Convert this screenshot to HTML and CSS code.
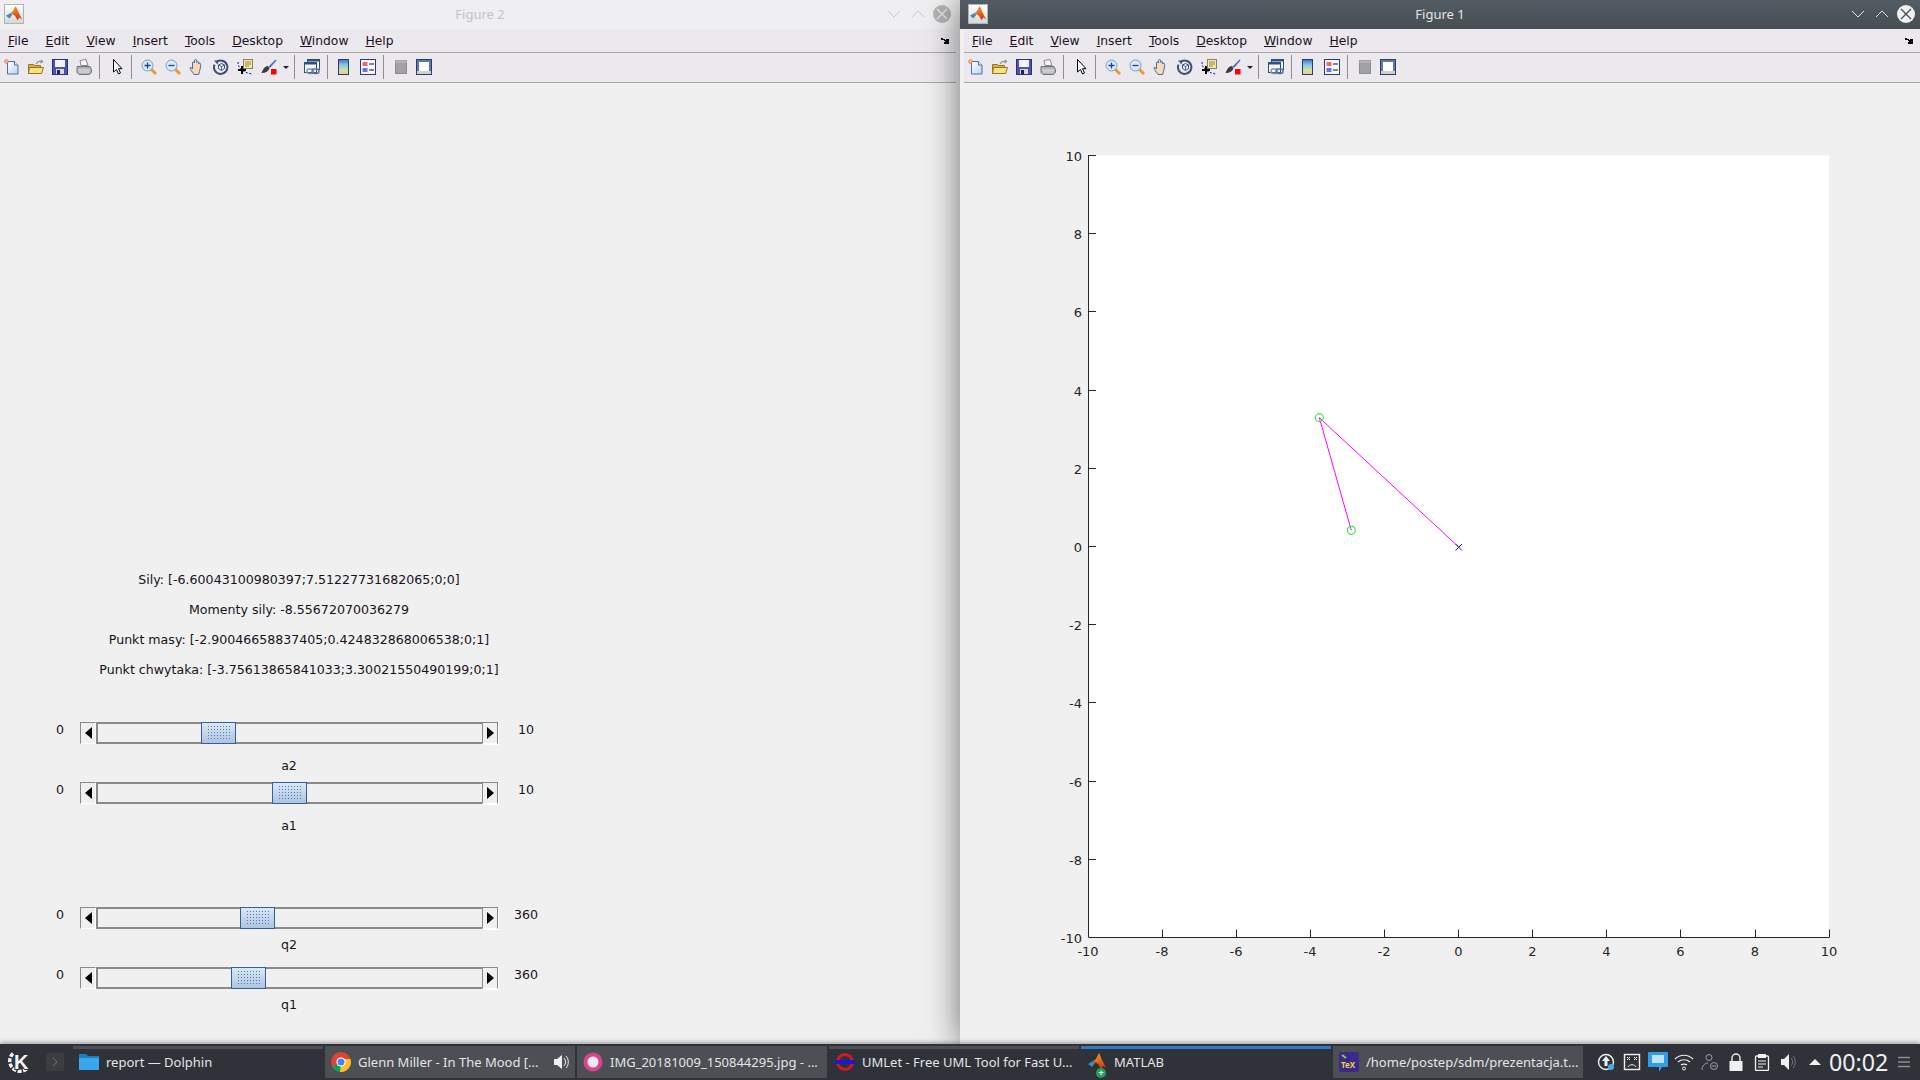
FILE: index.html
```html
<!DOCTYPE html>
<html lang="en">
<head>
    <meta charset="UTF-8">
    <title>Figure 1</title>
    <link rel="stylesheet" href="styles.css">
</head>
<body>
    <svg class="icon-defs" xmlns="http://www.w3.org/2000/svg">
        <defs>
            <linearGradient id="gradBar" x1="0" y1="0" x2="0" y2="1">
                <stop offset="0" stop-color="#3f6fd0"/>
                <stop offset=".35" stop-color="#86c6e0"/>
                <stop offset=".7" stop-color="#cfe0a8"/>
                <stop offset="1" stop-color="#f6c888"/>
            </linearGradient>
            <linearGradient id="gradDoc" x1="0" y1="0" x2="1" y2="1">
                <stop offset="0" stop-color="#ffffff"/>
                <stop offset="1" stop-color="#b8d4f0"/>
            </linearGradient>
            <linearGradient id="gradPeak" x1="0" y1="0" x2="0" y2="1">
                <stop offset="0" stop-color="#f59a1c"/>
                <stop offset="1" stop-color="#c8321a"/>
            </linearGradient>
        </defs>
        <symbol id="i-matlab" viewBox="0 0 20 20">
            <path d="M1 12l5-3 2 2-3 4z" fill="#3f8fb4"/>
            <path d="M6 9l3-2 3-6 3 7 4 8-3-2-2 3-3-5-3-2z" fill="url(#gradPeak)"/>
            <path d="M12 1l-3 6-2 4 4-2z" fill="#e8781f"/>
        </symbol>
        <symbol id="i-new" viewBox="0 0 16 16">
            <path d="M3.5 2.5h7l3.5 3.500v9H3.500z" fill="url(#gradDoc)" stroke="#4c72a4"/>
            <path d="M10.5 2.5V6H14" fill="#eef4fb" stroke="#4c72a4"/>
            <circle cx="2.5" cy="2.5" r="1.8" fill="#f8c090" stroke="#e8683a" stroke-width=".8"/>
        </symbol>
        <symbol id="i-open" viewBox="0 0 16 16">
            <path d="M.5 5.5h5l1 1h6v8H.5z" fill="#e0b23c" stroke="#94761c"/>
            <path d="M.5 14.5l1-6h14l-2 6z" fill="#f8e288" stroke="#94761c"/>
            <path d="M8 5c1-2 3-3 5-2.500M13 1l1.500 1.500-2 1.500" fill="none" stroke="#7e8fa0" stroke-width="1.2"/>
        </symbol>
        <symbol id="i-save" viewBox="0 0 16 16">
            <rect x=".5" y=".5" width="15" height="15" fill="#4a55b0" stroke="#2c3278"/>
            <rect x="3" y="1" width="10" height="7" fill="#f2f2f8"/>
            <rect x="4" y="10" width="8" height="5" fill="#d8d8d8"/>
            <rect x="5" y="11" width="3" height="4" fill="#22244c"/>
        </symbol>
        <symbol id="i-print" viewBox="0 0 16 16">
            <path d="M4 1.5l6-1 2 6H5z" fill="#f4f4f4" stroke="#8a8a8a"/>
            <path d="M1 7.5h13l1.500 3v3l-2 2H3l-2-2z" fill="#b4b4b4" stroke="#747474"/>
            <path d="M2 11h12M3 13h10" stroke="#e4e4e4"/>
        </symbol>
        <symbol id="i-arrow" viewBox="0 0 16 16">
            <path d="M4.5 .5V13l3-2.500 2 4.500 2-1-2-4.300H13z" fill="#fff" stroke="#000"/>
        </symbol>
        <symbol id="i-zoomin" viewBox="0 0 16 16">
            <path d="M10 10l5 5" stroke="#e89a38" stroke-width="3"/>
            <circle cx="6.5" cy="6.5" r="5.5" fill="#d6eaf8" stroke="#7e9cb6"/>
            <path d="M3.5 6.5h6M6.5 3.5v6" stroke="#23409c" stroke-width="1.3"/>
        </symbol>
        <symbol id="i-zoomout" viewBox="0 0 16 16">
            <path d="M10 10l5 5" stroke="#e89a38" stroke-width="3"/>
            <circle cx="6.5" cy="6.5" r="5.5" fill="#d6eaf8" stroke="#7e9cb6"/>
            <path d="M3.5 6.5h6" stroke="#23409c" stroke-width="1.3"/>
        </symbol>
        <symbol id="i-hand" viewBox="0 0 16 16">
            <path d="M5 15.5c-1-2-4-5-4-6.500 0-1 1.500-1 2.500 1V4c0-1.500 1.800-1.500 2 0V1.500c0-1.500 2-1.500 2.200 0v2c.3-1.500 2-1.300 2 .2V5c.5-1.300 2-1 2 .5 0 3-1 6-2 10z" fill="#fbd8b4" stroke="#3f6ea8"/>
        </symbol>
        <symbol id="i-rotate" viewBox="0 0 16 16">
            <path d="M4 2.6a6.700 6.700 0 1 1-2.500 3" fill="none" stroke="#3a5078" stroke-width="2"/>
            <path d="M1 1.500h4.500l-1 4z" fill="#3a5078"/>
            <path d="M5.500 6l3-1.500 3 1.500v3.500l-3 2-3-2z" fill="#e6eef6" stroke="#3a5078"/>
            <path d="M8.500 7.500V11M5.500 6l3 1.500 3-1.500" stroke="#3a5078" fill="none" stroke-width=".8"/>
        </symbol>
        <symbol id="i-cursor" viewBox="0 0 16 16">
            <rect x="6.5" y=".5" width="9" height="9" fill="#f4e9a4" stroke="#8c8458"/>
            <path d="M8 3h6M8 5h6M8 7h4" stroke="#8c8458"/>
            <path d="M1 3c0 5 3 10 14 12" fill="none" stroke="#1212e0" stroke-dasharray="2 1.5"/>
            <path d="M1 11h8M5 7v8" stroke="#000" stroke-width="2"/>
        </symbol>
        <symbol id="i-brush" viewBox="0 0 16 16">
            <path d="M14.500 .5l-7 7L9 9l6.500-7.500z" fill="#3c62b8" stroke="#b4c6e8" stroke-width=".6"/>
            <path d="M7 7c-3 0-5 3-6.500 7 2.500 0 6-.5 8-4.500z" fill="#3c3c3c"/>
            <rect x="10" y="10" width="5.5" height="5.5" fill="#f00"/>
        </symbol>
        <symbol id="i-link" viewBox="0 0 16 16">
            <rect x="3.5" y=".5" width="12" height="10" fill="#f4f6fa" stroke="#30507c"/>
            <rect x="3.5" y=".5" width="12" height="2" fill="#30507c"/>
            <rect x=".5" y="3.5" width="12" height="10" fill="#f4f6fa" stroke="#30507c"/>
            <rect x=".5" y="3.5" width="12" height="2" fill="#30507c"/>
            <rect x="3" y="10" width="6.5" height="4.5" rx="2.2" fill="none" stroke="#8094ac" stroke-width="1.5"/>
            <rect x="8" y="10" width="7" height="4.5" rx="2.2" fill="none" stroke="#5c7494" stroke-width="1.5"/>
        </symbol>
        <symbol id="i-colorbar" viewBox="0 0 16 16">
            <rect x="2.5" y=".5" width="10" height="15" fill="url(#gradBar)" stroke="#283c70"/>
        </symbol>
        <symbol id="i-legend" viewBox="0 0 16 16">
            <rect x=".5" y=".5" width="15" height="15" fill="#f8f8fc" stroke="#283c70"/>
            <rect x="2.5" y="3" width="5" height="4" fill="#e86a6a"/>
            <rect x="2.5" y="9" width="5" height="4" fill="#7070e0"/>
            <path d="M9 5h5M9 11h5" stroke="#101010"/>
        </symbol>
        <symbol id="i-square" viewBox="0 0 16 16">
            <rect x="2.5" y="1.5" width="11" height="13" fill="#a2a2a2" stroke="#8c8c8c"/>
            <rect x="2.5" y="1.5" width="11" height="2" fill="#b8b8b8"/>
        </symbol>
        <symbol id="i-browser" viewBox="0 0 16 16">
            <rect x=".5" y=".5" width="15" height="15" fill="#5f78a8" stroke="#283c70"/>
            <rect x="3" y="3" width="10" height="9" fill="#fff"/>
            <rect x="1" y="12" width="14" height="3" fill="#cfd4c8"/>
        </symbol>
    </svg>

    <div class="desk">
        <div class="window window-left">
            <div class="titlebar">
                <svg class="title-icon"><use href="#i-matlab"/></svg>
                <span class="title-text">Figure 2</span>
                <div class="title-btns">
                    <svg class="title-btn" viewBox="0 0 14 14"><path d="M1 4l6 6 6-6" fill="none" stroke="currentColor"/></svg>
                    <svg class="title-btn" viewBox="0 0 14 14"><path d="M1 10l6-6 6 6" fill="none" stroke="currentColor"/></svg>
                    <div class="close-btn"><svg viewBox="0 0 18 18"><path d="M4 4l10 10M14 4L4 14" fill="none" stroke="currentColor" stroke-width="1.3"/></svg></div>
                </div>
            </div>
            <div class="menubar">
                <span class="menu-item"><u>F</u>ile</span>
                <span class="menu-item"><u>E</u>dit</span>
                <span class="menu-item"><u>V</u>iew</span>
                <span class="menu-item"><u>I</u>nsert</span>
                <span class="menu-item"><u>T</u>ools</span>
                <span class="menu-item"><u>D</u>esktop</span>
                <span class="menu-item"><u>W</u>indow</span>
                <span class="menu-item"><u>H</u>elp</span>
                <svg class="dock-arrow" viewBox="0 0 9 8"><path d="M0 1h2v1h2v1h1V2h3v5H3V5h1V4H3V3H0z"/></svg>
            </div>
            <div class="toolbar">
                <span class="tool"><svg><use href="#i-new"/></svg></span>
                <span class="tool"><svg><use href="#i-open"/></svg></span>
                <span class="tool"><svg><use href="#i-save"/></svg></span>
                <span class="tool"><svg><use href="#i-print"/></svg></span>
                <span class="sep"></span>
                <span class="tool tool-narrow"><svg><use href="#i-arrow"/></svg></span>
                <span class="sep"></span>
                <span class="tool"><svg><use href="#i-zoomin"/></svg></span>
                <span class="tool"><svg><use href="#i-zoomout"/></svg></span>
                <span class="tool"><svg><use href="#i-hand"/></svg></span>
                <span class="tool"><svg><use href="#i-rotate"/></svg></span>
                <span class="tool"><svg><use href="#i-cursor"/></svg></span>
                <span class="tool"><svg><use href="#i-brush"/></svg></span>
                <span class="tool-drop"></span>
                <span class="sep"></span>
                <span class="tool"><svg><use href="#i-link"/></svg></span>
                <span class="sep sep-tight"></span>
                <span class="tool"><svg><use href="#i-colorbar"/></svg></span>
                <span class="tool"><svg><use href="#i-legend"/></svg></span>
                <span class="sep"></span>
                <span class="tool tool-narrow"><svg><use href="#i-square"/></svg></span>
                <span class="tool"><svg><use href="#i-browser"/></svg></span>
            </div>
            <div class="figure figure-controls">
                <div class="readout">
                    <p>Sily: [-6.60043100980397;7.51227731682065;0;0]</p>
                    <p>Momenty sily: -8.55672070036279</p>
                    <p>Punkt masy: [-2.90046658837405;0.424832868006538;0;1]</p>
                    <p>Punkt chwytaka: [-3.75613865841033;3.30021550490199;0;1]</p>
                </div>
                <div class="slider-group">
                    <div class="slider-row">
                        <span class="limit">0</span>
                        <div class="slider">
                            <span class="step step-left"></span>
                            <div class="track"><span class="thumb" style="margin-left:103px"></span></div>
                            <span class="step step-right"></span>
                        </div>
                        <span class="limit">10</span>
                        <span class="caption">a2</span>
                    </div>
                    <div class="slider-row">
                        <span class="limit">0</span>
                        <div class="slider">
                            <span class="step step-left"></span>
                            <div class="track"><span class="thumb" style="margin-left:174px"></span></div>
                            <span class="step step-right"></span>
                        </div>
                        <span class="limit">10</span>
                        <span class="caption">a1</span>
                    </div>
                </div>
                <div class="slider-group slider-group-angles">
                    <div class="slider-row">
                        <span class="limit">0</span>
                        <div class="slider">
                            <span class="step step-left"></span>
                            <div class="track"><span class="thumb" style="margin-left:142px"></span></div>
                            <span class="step step-right"></span>
                        </div>
                        <span class="limit">360</span>
                        <span class="caption">q2</span>
                    </div>
                    <div class="slider-row">
                        <span class="limit">0</span>
                        <div class="slider">
                            <span class="step step-left"></span>
                            <div class="track"><span class="thumb" style="margin-left:133px"></span></div>
                            <span class="step step-right"></span>
                        </div>
                        <span class="limit">360</span>
                        <span class="caption">q1</span>
                    </div>
                </div>
            </div>
        </div>

        <div class="window window-right">
            <div class="titlebar">
                <svg class="title-icon"><use href="#i-matlab"/></svg>
                <span class="title-text">Figure 1</span>
                <div class="title-btns">
                    <svg class="title-btn" viewBox="0 0 14 14"><path d="M1 4l6 6 6-6" fill="none" stroke="currentColor"/></svg>
                    <svg class="title-btn" viewBox="0 0 14 14"><path d="M1 10l6-6 6 6" fill="none" stroke="currentColor"/></svg>
                    <div class="close-btn"><svg viewBox="0 0 18 18"><path d="M4 4l10 10M14 4L4 14" fill="none" stroke="currentColor" stroke-width="1.3"/></svg></div>
                </div>
            </div>
            <div class="menubar">
                <span class="menu-item"><u>F</u>ile</span>
                <span class="menu-item"><u>E</u>dit</span>
                <span class="menu-item"><u>V</u>iew</span>
                <span class="menu-item"><u>I</u>nsert</span>
                <span class="menu-item"><u>T</u>ools</span>
                <span class="menu-item"><u>D</u>esktop</span>
                <span class="menu-item"><u>W</u>indow</span>
                <span class="menu-item"><u>H</u>elp</span>
                <svg class="dock-arrow" viewBox="0 0 9 8"><path d="M0 1h2v1h2v1h1V2h3v5H3V5h1V4H3V3H0z"/></svg>
            </div>
            <div class="toolbar">
                <span class="tool"><svg><use href="#i-new"/></svg></span>
                <span class="tool"><svg><use href="#i-open"/></svg></span>
                <span class="tool"><svg><use href="#i-save"/></svg></span>
                <span class="tool"><svg><use href="#i-print"/></svg></span>
                <span class="sep"></span>
                <span class="tool tool-narrow"><svg><use href="#i-arrow"/></svg></span>
                <span class="sep"></span>
                <span class="tool"><svg><use href="#i-zoomin"/></svg></span>
                <span class="tool"><svg><use href="#i-zoomout"/></svg></span>
                <span class="tool"><svg><use href="#i-hand"/></svg></span>
                <span class="tool"><svg><use href="#i-rotate"/></svg></span>
                <span class="tool"><svg><use href="#i-cursor"/></svg></span>
                <span class="tool"><svg><use href="#i-brush"/></svg></span>
                <span class="tool-drop"></span>
                <span class="sep"></span>
                <span class="tool"><svg><use href="#i-link"/></svg></span>
                <span class="sep sep-tight"></span>
                <span class="tool"><svg><use href="#i-colorbar"/></svg></span>
                <span class="tool"><svg><use href="#i-legend"/></svg></span>
                <span class="sep"></span>
                <span class="tool tool-narrow"><svg><use href="#i-square"/></svg></span>
                <span class="tool"><svg><use href="#i-browser"/></svg></span>
            </div>
            <div class="figure">
                <!-- viewBox uses page coordinates -->
                <svg class="plot" viewBox="964 83 956 961">
                    <rect x="1088.5" y="155.5" width="740.5" height="782" fill="#fff"/>
                    <path class="axis" d="M1088.5 155v782.500H1829.500"/>
                    <path class="axis" d="M1088.5 155.5h7.500M1088.5 233.5h7.500M1088.5 311.5h7.500M1088.5 390.5h7.500M1088.5 468.5h7.500M1088.5 546.5h7.500M1088.5 624.5h7.500M1088.5 702.5h7.500M1088.5 781.5h7.500M1088.5 859.5h7.500"/>
                    <path class="axis" d="M1162.5 937v-7.500M1236.5 937v-7.500M1310.5 937v-7.500M1384.5 937v-7.500M1458.5 937v-7.500M1532.5 937v-7.500M1606.5 937v-7.500M1680.5 937v-7.500M1755.5 937v-7.500M1829.5 937v-7.500"/>
                    <g class="ticks-y">
                        <text x="1082" y="161">10</text>
                        <text x="1082" y="239">8</text>
                        <text x="1082" y="317">6</text>
                        <text x="1082" y="396">4</text>
                        <text x="1082" y="474">2</text>
                        <text x="1082" y="552">0</text>
                        <text x="1082" y="630">-2</text>
                        <text x="1082" y="708">-4</text>
                        <text x="1082" y="787">-6</text>
                        <text x="1082" y="865">-8</text>
                        <text x="1082" y="943">-10</text>
                    </g>
                    <g class="ticks-x">
                        <text x="1088" y="956">-10</text>
                        <text x="1162" y="956">-8</text>
                        <text x="1236" y="956">-6</text>
                        <text x="1310" y="956">-4</text>
                        <text x="1384" y="956">-2</text>
                        <text x="1458.5" y="956">0</text>
                        <text x="1532.5" y="956">2</text>
                        <text x="1606.5" y="956">4</text>
                        <text x="1680.5" y="956">6</text>
                        <text x="1755" y="956">8</text>
                        <text x="1829" y="956">10</text>
                    </g>
                    <path d="M1351.3 530.3L1319.3 417.7L1458.7 547" fill="none" stroke="#f0f"/>
                    <circle cx="1319.3" cy="417.7" r="4" fill="none" stroke="#3fe83f" stroke-width="1.2"/>
                    <circle cx="1351.3" cy="530.3" r="4" fill="none" stroke="#3fe83f" stroke-width="1.2"/>
                    <path d="M1455.5 544l6.500 6.500M1462 544l-6.500 6.500" stroke="#1a1af0"/>
                </svg>
            </div>
        </div>
    </div>

    <div class="taskbar">
        <div class="kicker">
            <svg viewBox="0 0 24 24" class="kde-logo">
                <path d="M7 3.500A10 10 0 1 0 21 18.500" fill="none" stroke="#f2f2f2" stroke-width="3.500" stroke-dasharray="4 1.5"/>
                <text x="8" y="18.500" class="kde-k">K</text>
            </svg>
        </div>
        <div class="pager"><svg viewBox="0 0 18 18"><path d="M7 5l4 4-4 4" fill="none" stroke="#6f7477"/></svg></div>
        <div class="tasks">
            <div class="task task-open">
                <svg class="task-icon" viewBox="0 0 20 20">
                    <path d="M0 2h7l2 2h11v14H0z" fill="#1b7fc8"/>
                    <path d="M0 6h20v12H0z" fill="#3aa6ec"/>
                </svg>
                <span>report — Dolphin</span>
            </div>
            <div class="task task-lit">
                <svg class="task-icon" viewBox="0 0 20 20">
                    <circle cx="10" cy="10" r="10" fill="#db4437"/>
                    <path d="M10 10L1.300 15A10 10 0 0 0 10 20l5-8z" fill="#0f9d58"/>
                    <path d="M10 10l-1 10A10 10 0 0 0 19.500 7H10z" fill="#fbc02d"/>
                    <circle cx="10" cy="10" r="4.6" fill="#fff"/>
                    <circle cx="10" cy="10" r="3.5" fill="#4285f4"/>
                </svg>
                <span class="task-label">Glenn Miller - In The Mood [...</span>
                <svg class="task-sound" viewBox="0 0 16 16">
                    <path d="M1 5h3l5-4v14l-5-4H1z" fill="#eff0f1"/>
                    <path d="M11 4c2 2 2 6 0 8M13 2c3 3 3 9 0 12" fill="none" stroke="#eff0f1"/>
                </svg>
            </div>
            <div class="task task-lit">
                <svg class="task-icon" viewBox="0 0 20 20">
                    <circle cx="10" cy="10" r="9.5" fill="#d6458f"/>
                    <circle cx="10" cy="10" r="5.5" fill="#f4e9ef"/>
                </svg>
                <span>IMG_20181009_150844295.jpg - ...</span>
            </div>
            <div class="task task-open">
                <svg class="task-icon" viewBox="0 0 20 20">
                    <circle cx="10" cy="10" r="7.5" fill="none" stroke="#d81820" stroke-width="3"/>
                    <rect x="0" y="8" width="20" height="4" fill="#1818e0"/>
                </svg>
                <span>UMLet - Free UML Tool for Fast U...</span>
            </div>
            <div class="task task-active">
                <svg class="task-icon" viewBox="0 0 20 20"><use href="#i-matlab"/></svg>
                <span class="launch-badge">+</span>
                <span>MATLAB</span>
            </div>
            <div class="task task-lit">
                <svg class="task-icon" viewBox="0 0 20 20">
                    <rect width="20" height="20" rx="2" fill="#3a2a8c"/>
                    <path d="M3 3l4 3" stroke="#8fd03a" stroke-width="2"/>
                    <text x="2" y="16" class="tex-mark">TeX</text>
                </svg>
                <span>/home/postep/sdm/prezentacja.t...</span>
            </div>
        </div>
        <div class="tray">
            <svg class="tray-icon" viewBox="0 0 18 18">
                <circle cx="9" cy="9" r="7.5" fill="none" stroke="#eff0f1" stroke-width="1.4"/>
                <path d="M9 3l4 5h-2.500v5h-3V8H5z" fill="#eff0f1"/>
                <circle cx="14" cy="14" r="3" fill="#3daee9"/>
            </svg>
            <svg class="tray-icon" viewBox="0 0 18 18">
                <rect x="1.5" y="1.5" width="15" height="15" fill="none" stroke="#eff0f1" stroke-width="1.4"/>
                <path d="M4 4l3 3M7 4L4 7M11 4l3 3M14 4l-3 3M5 14c1-3 7-3 8 0" fill="none" stroke="#eff0f1"/>
            </svg>
            <svg class="tray-icon tray-icon-big" viewBox="0 0 20 20">
                <path d="M1 0h18a1 1 0 0 1 1 1v13a1 1 0 0 1-1 1h-5l-3 5v-5H1a1 1 0 0 1-1-1V1a1 1 0 0 1 1-1z" fill="#2f9ee8"/>
                <rect x="4" y="3" width="12" height="8" fill="#bfe2f8"/>
            </svg>
            <svg class="tray-icon tray-icon-big" viewBox="0 0 20 20">
                <path d="M1 7c5-5 13-5 18 0M4 10c3.500-3 8.500-3 12 0M7 13c1.500-1.300 4.500-1.300 6 0" fill="none" stroke="#eff0f1" stroke-width="1.2"/>
                <circle cx="10" cy="16.5" r="1.5" fill="none" stroke="#eff0f1"/>
            </svg>
            <svg class="tray-icon" viewBox="0 0 18 18">
                <circle cx="8" cy="4.5" r="3" fill="none" stroke="#9ea1a3"/>
                <path d="M1 17c0-4 3-7 6-7" fill="none" stroke="#9ea1a3"/>
                <circle cx="13" cy="13" r="3.5" fill="none" stroke="#9ea1a3"/>
                <path d="M11 13h4" stroke="#9ea1a3"/>
            </svg>
            <svg class="tray-icon" viewBox="0 0 18 18">
                <path d="M5 8V5a4 4 0 0 1 8 0v3" fill="none" stroke="#eff0f1" stroke-width="1.4"/>
                <rect x="2.5" y="8" width="13" height="10" fill="#eff0f1"/>
            </svg>
            <svg class="tray-icon" viewBox="0 0 18 18">
                <rect x="2.5" y="3" width="13" height="14.5" rx="1" fill="none" stroke="#eff0f1" stroke-width="1.3"/>
                <rect x="5" y="1" width="8" height="4" fill="#eff0f1"/>
                <path d="M5 8h8M5 11h8M5 14h5" stroke="#eff0f1"/>
            </svg>
            <svg class="tray-icon" viewBox="0 0 18 18">
                <path d="M2 6h3l5-5v16l-5-5H2z" fill="#eff0f1"/>
                <path d="M12 5c2 2 2 6 0 8M14 3c3 3 3 9 0 12" fill="none" stroke="#73777a"/>
            </svg>
            <svg class="tray-icon tray-up" viewBox="0 0 14 14"><path d="M1 10l6-6 6 6z" fill="#eff0f1"/></svg>
            <span class="clock">00:02</span>
            <svg class="tray-menu" viewBox="0 0 12 12"><path d="M0 1.500h12M0 6h12M0 10.500h12" stroke="#8b8e90" stroke-width="1.5"/></svg>
        </div>
    </div>
</body>
</html>
```

FILE: styles.css
```css
* {
    box-sizing: border-box;
    margin: 0;
    padding: 0;
}
html, body {
    width: 1920px;
    height: 1080px;
    overflow: hidden;
}
body {
    display: flex;
    flex-direction: column;
    font-family: "DejaVu Sans", sans-serif;
    background: #f0f0f0;
}
.icon-defs {
    position: absolute;
    width: 0;
    height: 0;
}
.desk {
    display: flex;
    height: 1044px;
}
.window {
    width: 960px;
    display: flex;
    flex-direction: column;
    background: #f0f0f0;
}
.window-left {
    padding-right: 4px;
}
.window-right {
    padding-left: 4px;
    position: relative;
    z-index: 1;
    box-shadow: 0 0 32px rgba(0, 0, 0, 0.55);
}

/* title bars */
.titlebar {
    height: 29px;
    display: flex;
    align-items: center;
    justify-content: center;
    position: relative;
    padding-bottom: 1px;
    font-family: "Noto Sans", sans-serif;
    font-size: 13px;
}
.window-left .titlebar {
    margin-right: -4px;
    background: #efeef0;
    color: #c4c4c6;
}
.window-right .titlebar {
    margin-left: -4px;
    background: linear-gradient(#545d64, #464d53);
    color: #e4e5e6;
}
.title-icon {
    position: absolute;
    left: 4px;
    top: 4px;
    width: 20px;
    height: 20px;
    background: linear-gradient(#ffffff, #d4d6d8);
    border: 1px solid #b0b4b8;
}
.window-right .title-icon {
    left: 8px;
}
.title-btns {
    position: absolute;
    right: 5px;
    top: 5px;
    display: flex;
    align-items: center;
    gap: 10px;
}
.window-left .title-btns {
    right: 9px;
}
.title-btn {
    width: 14px;
    height: 14px;
}
.window-left .title-btn {
    color: #c9c9cb;
}
.close-btn {
    width: 18px;
    height: 18px;
    margin-left: -2px;
    border-radius: 50%;
    background: #eff0f1;
    color: #4d4d4d;
}
.window-left .close-btn {
    background: #b4b4b4;
    color: #e8e8e8;
}
.close-btn svg {
    display: block;
}

/* menu and tool bars */
.menubar {
    height: 24px;
    display: flex;
    align-items: center;
    gap: 17px;
    padding: 0 6px 0 8px;
    background: #ebe9ed;
    border-bottom: 1px solid #a8a8a8;
    font-size: 12.3px;
    color: #1c1020;
}
.dock-arrow {
    width: 9px;
    height: 8px;
    margin-left: auto;
}
.toolbar {
    height: 30px;
    display: flex;
    align-items: center;
    padding-bottom: 1px;
    background: #ebe9ed;
    border-bottom: 1px solid #a8a8a8;
}
.tool {
    width: 24px;
    display: flex;
    justify-content: center;
}
.tool-narrow {
    width: 23px;
}
.tool svg {
    width: 16px;
    height: 16px;
}
.tool-drop {
    width: 6px;
    height: 3px;
    margin: 0 2px;
    border-top: 3px solid #222;
    border-left: 3px solid transparent;
    border-right: 3px solid transparent;
}
.sep {
    width: 1px;
    height: 24px;
    margin: 0 5px 0 3px;
    background: #8e8e8e;
}
.sep-tight {
    margin-right: 4px;
}

/* figure contents */
.figure {
    flex: 1;
    min-height: 0;
}
.plot {
    display: block;
    width: 956px;
    height: 961px;
}
.axis {
    fill: none;
    stroke: #262626;
}
.plot text {
    font-size: 13px;
    fill: #262626;
}
.ticks-y text {
    text-anchor: end;
}
.ticks-x text {
    text-anchor: middle;
}
.figure-controls {
    padding-top: 482px;
    font-size: 12.6px;
    color: #1a1020;
}
.readout {
    width: 598px;
    text-align: center;
    line-height: 30px;
    margin-bottom: 37px;
}
.slider-group {
    padding-left: 40px;
}
.slider-group-angles {
    margin-top: 73px;
}
.slider-row {
    display: grid;
    grid-template-columns: 40px 418px 56px;
    grid-template-rows: 22px 16px;
    row-gap: 14px;
    margin-bottom: 8px;
}
.slider-group-angles .slider-row {
    row-gap: 8px;
    margin-bottom: 14px;
}
.limit {
    text-align: center;
    line-height: 16px;
}
.caption {
    grid-column: 2;
    text-align: center;
    line-height: 16px;
}
.slider {
    display: flex;
    height: 22px;
}
.step {
    width: 16px;
    height: 22px;
    display: flex;
    align-items: center;
    justify-content: center;
    background: #f0f0f0;
    border: 1px solid #8a8a8a;
    border-right-color: #fff;
    border-bottom-color: #fff;
}
.step-right {
    border-left-color: #8a8a8a;
    border-right-color: #8a8a8a;
    box-shadow: 1px 1px 0 #fff;
}
.step::before {
    content: "";
    border-top: 6px solid transparent;
    border-bottom: 6px solid transparent;
}
.step-left::before {
    border-right: 7px solid #000;
}
.step-right::before {
    border-left: 7px solid #000;
}
.track {
    flex: 1;
    height: 22px;
    background: #f0f0f0;
    border: 2px solid #8a8a8a;
    border-right: none;
}
.thumb {
    display: flex;
    align-items: center;
    justify-content: center;
    width: 35px;
    height: 22px;
    margin-top: -2px;
    background: linear-gradient(#dce8f4, #aec4de);
    border: 1px solid #2f5fa6;
}
.thumb::before {
    content: "";
    width: 23px;
    height: 16px;
    background-image: radial-gradient(circle, #4a78c6 0.6px, transparent 0.9px);
    background-size: 3px 3px;
}

/* taskbar */
.taskbar {
    height: 36px;
    display: flex;
    position: relative;
    z-index: 2;
    background: #2f3238;
    box-shadow: 0 -2px 4px rgba(0, 0, 0, 0.3);
    font-family: "Noto Sans", sans-serif;
    font-size: 13px;
    color: #e4e5e6;
}
.kicker {
    width: 46px;
    padding: 6px 0 0 6px;
}
.kde-logo {
    display: block;
    width: 24px;
    height: 24px;
}
.kde-k {
    font-family: "Liberation Sans", sans-serif;
    font-weight: bold;
    font-size: 20px;
    fill: #f4f4f4;
    stroke: #2f3238;
    stroke-width: 2px;
    paint-order: stroke;
}
.pager {
    width: 18px;
    height: 18px;
    margin-top: 9px;
    margin-right: 9px;
    background: #3a3e3f;
}
.tasks {
    display: flex;
    gap: 2px;
    height: 32px;
    margin-top: 2px;
}
.task {
    width: 250px;
    display: flex;
    align-items: center;
    gap: 7px;
    padding: 0 6px;
    position: relative;
}
.task-open {
    background: linear-gradient(#4d5053 3px, transparent 3px);
}
.task-active {
    background: linear-gradient(#2a7cc7 3px, transparent 3px);
}
.task-lit {
    background: #4c4f53;
}
.task-icon {
    width: 20px;
    height: 20px;
    flex: none;
}
.task-label {
    flex: 1;
}
.task-sound {
    width: 16px;
    height: 16px;
}
.launch-badge {
    position: absolute;
    left: 15px;
    top: 22px;
    width: 10px;
    height: 10px;
    border-radius: 50%;
    background: #1da35a;
    color: #fff;
    font-size: 9px;
    font-weight: bold;
    line-height: 10px;
    text-align: center;
}
.tex-mark {
    font-size: 8px;
    font-weight: bold;
    fill: #f0d040;
}
.tray {
    flex: 1;
    display: flex;
    align-items: center;
    gap: 8px;
    padding-left: 14px;
}
.tray-icon {
    width: 18px;
    height: 18px;
    flex: none;
}
.tray-icon-big {
    width: 20px;
    height: 20px;
    margin: 0 -1px;
}
.tray-up {
    width: 14px;
    height: 14px;
    margin: 0 2px 0 3px;
}
.clock {
    font-size: 23.2px;
    margin-left: -3px;
    line-height: 36px;
    color: #eff0f1;
}
.tray-menu {
    width: 12px;
    height: 12px;
    margin-left: 2px;
}
```
